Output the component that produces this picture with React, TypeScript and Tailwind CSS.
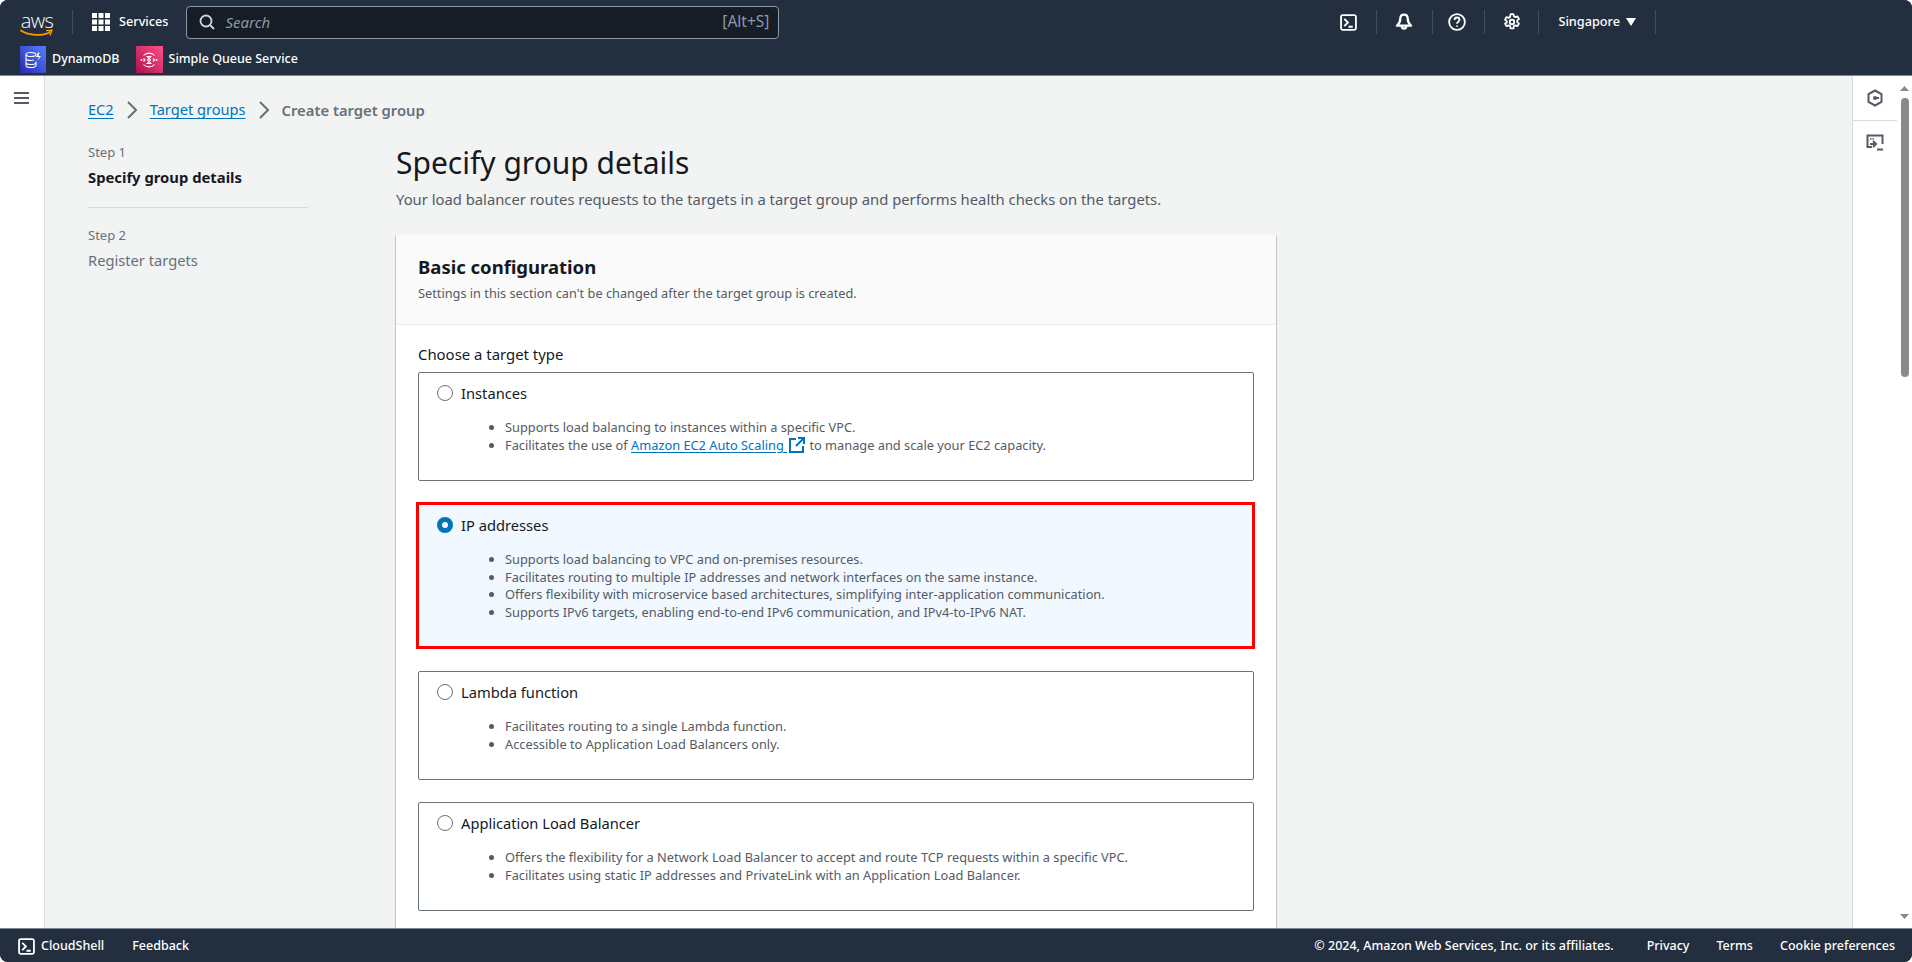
const FONT = "font-['Noto_Sans','Open_Sans',sans-serif]"

function Divider() {
  return <span className="block w-px h-6 bg-[#414d5c]" />
}

function TerminalIcon({ className = '' }: { className?: string }) {
  return (
    <svg viewBox="0 0 16 16" className={className} fill="none" stroke="currentColor" strokeWidth="1.7">
      <rect x="1" y="1" width="14" height="14" rx="1.5" />
      <path d="M4 4.5 7.5 8 4 11.5M8 12h4" />
    </svg>
  )
}

function GridIcon() {
  return (
    <svg viewBox="0 0 18 18" className="w-[18px] h-[18px]" fill="#fff">
      {[0, 6.5, 13].flatMap((y) =>
        [0, 6.5, 13].map((x) => <rect key={`${x}-${y}`} x={x} y={y} width="5" height="5" />),
      )}
    </svg>
  )
}

function Chevron() {
  return (
    <svg viewBox="0 0 10 18" className="mx-[13px] w-[10px] h-[18px]" fill="none" stroke="#687078" strokeWidth="2">
      <path d="m1 1 8 8-8 8" />
    </svg>
  )
}

function AwsLogo() {
  return (
    <div className="relative w-[33px] h-6 flex flex-col items-center">
      <span className="pl-[1px] text-white text-[20px] leading-[19px] font-['Open_Sans',sans-serif] font-light tracking-[-0.6px]">aws</span>
      <svg viewBox="0 0 34 8" className="absolute left-0 top-[18px] w-[33px] h-2" fill="none">
        <path d="M1 1.5C9 7 24 7.5 31 3" stroke="#ff9900" strokeWidth="1.8" strokeLinecap="round" />
        <path d="M27.5 1.5 33 1.2 31 6" stroke="#ff9900" strokeWidth="1.4" strokeLinecap="round" />
      </svg>
    </div>
  )
}

function DynamoIcon() {
  return (
    <span className="w-[26px] h-[27px] flex items-center justify-center bg-gradient-to-tr from-[#2e27ad] to-[#527fff]">
      <svg viewBox="0 0 20 20" className="w-5 h-5" fill="none" stroke="#fff" strokeWidth="1.1">
        <ellipse cx="8" cy="4.5" rx="5" ry="2" />
        <path d="M3 4.5v11c0 1.1 2.2 2 5 2s5-.9 5-2v-4M3 8.5c0 1.1 2.2 2 5 2 1 0 2-.1 2.7-.4M3 12.5c0 1.1 2.2 2 5 2s5-.9 5-2" />
        <path d="M15 2.5 13 7h3l-1.500 4L18 6h-2.500l1-3.500z" fill="#fff" stroke="none" />
      </svg>
    </span>
  )
}

function SqsIcon() {
  return (
    <span className="w-[27px] h-[27px] flex items-center justify-center bg-gradient-to-tr from-[#b0084d] to-[#ff4f8b]">
      <svg viewBox="0 0 20 20" className="w-5 h-5" fill="none" stroke="#fff" strokeWidth="1.1">
        <path d="M4.5 5.5a7.5 7.5 0 0 1 11 0M4.5 14.5a7.5 7.5 0 0 0 11 0" />
        <path d="M7.5 6.5h5M7.5 13.500h5M8.500 6.500c0 2 3 2.500 3 3.500s-3 1.500-3 3.500M11.500 6.500c0 2-3 2.500-3 3.500s3 1.500 3 3.500" />
        <circle cx="2.5" cy="10" r="1" fill="#fff" stroke="none" />
        <circle cx="17.5" cy="10" r="1" fill="#fff" stroke="none" />
        <path d="M4.5 8.500 6 10l-1.500 1.500M14 8.500l1.500 1.500-1.500 1.500" />
      </svg>
    </span>
  )
}

function TopBar() {
  return (
    <header className="h-[76px] shrink-0 bg-[#232f3e] border-b border-[#7d8998] text-white">
      <div className="h-[44px] flex items-center pl-5">
        <div className="pt-[2px]"><AwsLogo /></div>
        <span className="ml-[19px] w-px h-6 bg-[#414d5c]" />
        <span className="ml-[19px]"><GridIcon /></span>
        <span className="ml-[9px] text-[12.7px] font-medium">Services</span>
        <div className="ml-[18px] w-[593px] h-[33px] flex items-center pl-3 pr-[8px] bg-[#161d26] border border-[#8d99a8] rounded-sm">
          <svg viewBox="0 0 16 16" className="w-4 h-4 shrink-0" fill="none" stroke="#d1d5db" strokeWidth="1.8">
            <circle cx="7" cy="7" r="5.5" />
            <path d="m11 11 4 4" />
          </svg>
          <span className="ml-[10px] text-[15px] italic text-[#8d99a8]">Search</span>
          <span className="ml-auto text-[15.5px] text-[#8d99a8] pr-[1px]">[Alt+S]</span>
        </div>
        <div className="ml-[561px] flex items-center">
          <TerminalIcon className="w-[17px] h-[17px]" />
          <span className="ml-[19px]"><Divider /></span>
          <svg viewBox="0 0 16 16" className="ml-[18px] w-[18px] h-[18px]" fill="none" stroke="#fff" strokeWidth="2">
            <path d="M8 1.5c-2.200 0-3.300 1.600-3.300 3.600 0 2.900-1 4.400-3 6.200h12.600c-2-1.800-3-3.300-3-6.200 0-2-1.100-3.600-3.300-3.600z" strokeLinejoin="round" />
            <path d="M6 11.800a2 2 0 1 0 4 0" />
          </svg>
          <span className="ml-[19px]"><Divider /></span>
          <svg viewBox="0 0 16 16" className="ml-[15px] w-[18px] h-[18px]" fill="none" stroke="#fff" strokeWidth="1.6">
            <circle cx="8" cy="8" r="7" />
            <path d="M5.800 6.200C5.800 4.900 6.800 4 8 4s2.200.9 2.200 2.100c0 1.700-2.200 1.800-2.200 3.400M8 11v1.200" />
          </svg>
          <span className="ml-[18px]"><Divider /></span>
          <svg viewBox="0 0 16 16" className="ml-[18px] w-[18px] h-[18px]" fill="none" stroke="#fff" strokeWidth="1.6" strokeLinejoin="round">
            <circle cx="8" cy="8" r="2" />
            <path d="M6.700 1h2.600l.4 2 1.300.7 1.900-.7 1.300 2.300-1.500 1.300v1.500l1.500 1.300-1.300 2.300-1.900-.7-1.300.7-.4 2H6.700l-.4-2-1.300-.7-1.900.7-1.300-2.300L3.300 8.700V7.200L1.800 5.900l1.300-2.300 1.900.7 1.300-.7z" />
          </svg>
          <span className="ml-[17px]"><Divider /></span>
          <span className="ml-[19px] text-[12.7px] font-medium">Singapore</span>
          <svg viewBox="0 0 10 8" className="ml-[6px] w-[10px] h-2" fill="#fff">
            <path d="M0 0h10L5 8z" />
          </svg>
          <span className="ml-[19px]"><Divider /></span>
        </div>
      </div>
      <div className="h-[30px] pt-[1px] flex items-center pl-5 text-[12.5px] font-medium">
        <DynamoIcon />
        <span className="ml-[6px]">DynamoDB</span>
        <span className="ml-[16px]"><SqsIcon /></span>
        <span className="ml-[6px]">Simple Queue Service</span>
      </div>
    </header>
  )
}

function Option({
  title,
  lines,
  selected = false,
}: {
  title: string
  lines: React.ReactNode[]
  selected?: boolean
}) {
  const box = selected
    ? 'h-[147px] mt-[-1px] ml-[-2px] mr-[-1px] bg-[#f1f8ff] border-[3px] border-[#ff0000] pl-[18px] pt-[8px]'
    : 'h-[109px] bg-white border border-[#687078] rounded-[2px] pl-[18px] pt-[8px]'
  return (
    <div className={box}>
      <div className="flex items-center h-6">
        {selected ? (
          <span className="w-4 h-4 rounded-full border-[5px] border-[#0073bb] bg-white" />
        ) : (
          <span className="w-4 h-4 rounded-full border border-[#687078] bg-white" />
        )}
        <span className="ml-[8px] text-[14.7px] text-[#16191f]">{title}</span>
      </div>
      <ul className="mt-[14px] ml-[68px] list-disc text-[12.8px] leading-[17.5px] text-[#545b64]">
        {lines.map((line, i) => (
          <li key={i}>{line}</li>
        ))}
      </ul>
    </div>
  )
}

function Footer() {
  return (
    <footer className="h-[34px] shrink-0 bg-[#232f3e] border-t border-[#7d8998] flex items-center pl-[18px] pr-[17px] pt-[1px] text-white text-[12.5px] font-medium">
      <TerminalIcon className="w-[17px] h-[17px]" />
      <span className="ml-[6px]">CloudShell</span>
      <span className="ml-[28px]">Feedback</span>
      <span className="ml-auto">© 2024, Amazon Web Services, Inc. or its affiliates.</span>
      <span className="ml-[33px]">Privacy</span>
      <span className="ml-[27px]">Terms</span>
      <span className="ml-[27px]">Cookie preferences</span>
    </footer>
  )
}

export default function App() {
  return (
    <div className={`${FONT} h-screen flex flex-col overflow-hidden bg-[#232f3e] rounded-[8px]`}>
      <TopBar />
      <div className="flex-1 min-h-0 flex">
        {/* Left nav rail */}
        <aside className="w-[45px] shrink-0 bg-white border-r border-[#d5dbdb] pt-[16px] pl-[14px]">
          <svg viewBox="0 0 15 13" className="w-[15px] h-[13px]" fill="#545b64">
            <rect width="15" height="2" />
            <rect y="5" width="15" height="2" />
            <rect y="10" width="15" height="2" />
          </svg>
        </aside>

        <main className="flex-1 min-w-0 overflow-hidden bg-[#f2f3f3] pl-[43px]">
          <nav className="h-[22px] mt-[23px] flex items-center text-[14.6px]">
            <a className="text-[#0073bb] underline underline-offset-[3px]">EC2</a>
            <Chevron />
            <a className="text-[#0073bb] underline underline-offset-[3px]">Target groups</a>
            <Chevron />
            <span className="text-[#687078] font-semibold text-[14.8px]">Create target group</span>
          </nav>

          <div className="flex">
            <div className="w-[308px] shrink-0 pr-[88px] pt-[21px]">
              <div className="text-[13px] leading-4 text-[#687078] mt-[2px]">Step 1</div>
              <div className="mt-[7px] text-[14.8px] leading-5 font-bold text-[#16191f]">Specify group details</div>
              <div className="mt-[20px] h-px bg-[#d5dbdb]" />
              <div className="mt-[19px] text-[13px] leading-4 text-[#687078]">Step 2</div>
              <div className="mt-[7px] text-[14.7px] leading-5 text-[#687078]">Register targets</div>
            </div>

            <div className="w-[880px] pt-[24px]">
              <h1 className="text-[30px] leading-9 text-[#16191f]">Specify group details</h1>
              <p className="mt-[8px] text-[14.8px] leading-5 text-[#545b64]">
                Your load balancer routes requests to the targets in a target group and performs health checks on the targets.
              </p>

              <section className="mt-[26px] bg-white shadow-[0_1px_1px_0_rgba(0,28,36,0.3),1px_1px_1px_0_rgba(0,28,36,0.15),-1px_1px_1px_0_rgba(0,28,36,0.15)]">
                <div className="h-[90px] bg-[#fafafa] border-b border-[#eaeded] px-[22px] pt-[19px]">
                  <h2 className="text-[18.5px] leading-[26px] font-bold text-[#16191f]">Basic configuration</h2>
                  <p className="mt-[5px] text-[12.75px] leading-4 text-[#545b64]">
                    Settings in this section can't be changed after the target group is created.
                  </p>
                </div>
                <div className="px-[22px] pt-[19px] pb-[120px]">
                  <div className="text-[14.9px] leading-5 text-[#16191f] mb-[8px]">Choose a target type</div>
                  <div className="flex flex-col gap-[22px]">
                    <Option
                      title="Instances"
                      lines={[
                        'Supports load balancing to instances within a specific VPC.',
                        <>
                          Facilitates the use of{' '}
                          <a className="text-[#0073bb] underline underline-offset-2 decoration-1">Amazon EC2 Auto Scaling&nbsp;</a>
                          <svg viewBox="0 0 16 16" className="inline w-4 h-4 ml-[2px] mr-[1px] align-[-3px]" fill="none" stroke="#0073bb" strokeWidth="2">
                            <path d="M7 2H1v13h13V9M9 1h6v6M15 1 7 9" />
                          </svg>{' '}
                          to manage and scale your EC2 capacity.
                        </>,
                      ]}
                    />
                    <Option
                      selected
                      title="IP addresses"
                      lines={[
                        'Supports load balancing to VPC and on-premises resources.',
                        'Facilitates routing to multiple IP addresses and network interfaces on the same instance.',
                        'Offers flexibility with microservice based architectures, simplifying inter-application communication.',
                        'Supports IPv6 targets, enabling end-to-end IPv6 communication, and IPv4-to-IPv6 NAT.',
                      ]}
                    />
                    <Option
                      title="Lambda function"
                      lines={[
                        'Facilitates routing to a single Lambda function.',
                        'Accessible to Application Load Balancers only.',
                      ]}
                    />
                    <Option
                      title="Application Load Balancer"
                      lines={[
                        'Offers the flexibility for a Network Load Balancer to accept and route TCP requests within a specific VPC.',
                        'Facilitates using static IP addresses and PrivateLink with an Application Load Balancer.',
                      ]}
                    />
                  </div>
                </div>
              </section>
            </div>
          </div>
        </main>

        {/* Right tool rail and page scrollbar */}
        <aside className="w-[45px] shrink-0 bg-white border-l border-[#d5dbdb] flex flex-col">
          <div className="h-[45px] border-b border-[#d5dbdb] flex items-center justify-center">
            <svg viewBox="0 0 16 18" className="w-4 h-[18px]" fill="none" stroke="#545b64" strokeWidth="2">
              <path d="M8 1.5 14.5 5v8L8 16.5 1.5 13V5z" />
              <circle cx="8" cy="9" r="2" fill="#545b64" stroke="none" />
              <path d="M8 9h4" />
            </svg>
          </div>
          <div className="h-[44px] flex items-center justify-center">
            <svg viewBox="0 0 18 18" className="w-[18px] h-[18px]" fill="none" stroke="#545b64" strokeWidth="2">
              <path d="M6 13H1.5V1.5h15V10" />
              <path d="M4 5h5" strokeWidth="1.6" strokeDasharray="1.5 1" />
              <path d="M4 10h6M7 7l3 3-3 3M11 15.5h6" />
            </svg>
          </div>
        </aside>
        <div className="w-[15px] shrink-0 bg-white flex flex-col items-center pt-[10px] pb-[9px]">
          <svg viewBox="0 0 9 5" className="w-[9px] h-[5px]" fill="#8a8a8a"><path d="M4.5 0 9 5H0z" /></svg>
          <div className="mt-[7px] w-2 h-[279px] rounded bg-[#8a8a8a]" />
          <svg viewBox="0 0 9 5" className="mt-auto w-[9px] h-[5px]" fill="#8a8a8a"><path d="M0 0h9L4.5 5z" /></svg>
        </div>
      </div>
      <Footer />
    </div>
  )
}
